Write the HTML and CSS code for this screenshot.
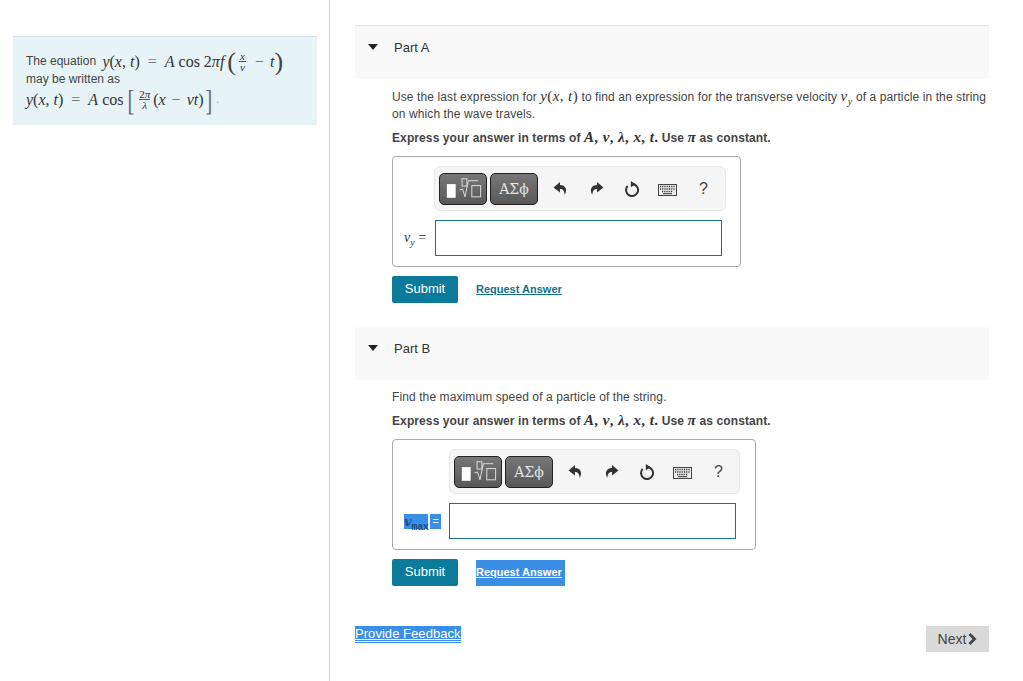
FILE: index.html
```html
<!DOCTYPE html>
<html lang="en">
<head>
  <meta charset="UTF-8">
  <meta name="viewport" content="width=device-width, initial-scale=1.0">
  <title>Part A and Part B</title>
  <link rel="stylesheet" href="styles.css">
</head>
<body>
  <svg class="icon-defs" width="0" height="0">
    <symbol id="i-root" viewBox="0 0 47 32">
      <rect x="7" y="11" width="9" height="14" fill="#fff"/>
      <g fill="none" stroke="#ddd">
        <rect x="22.500" y="5.500" width="5" height="7.500"/>
        <path d="M20 17l3-1 2.500 8L29 7.500h10"/>
        <rect x="32.500" y="12.500" width="9" height="11.500"/>
      </g>
    </symbol>
    <symbol id="i-undo" viewBox="0 0 14 14"><path d="M6.500 1 .5 6l6 4.800V7.500c2.800 0 4 1.500 4.500 5.500 2.800-5.200.5-9-4.500-9.200z"/></symbol>
    <symbol id="i-redo" viewBox="0 0 14 14"><path d="M7.500 1l6 5-6 4.800V7.500c-2.800 0-4 1.500-4.500 5.500C.2 7.800 2.500 4 7.500 3.800z"/></symbol>
    <symbol id="i-reset" viewBox="0 0 16 16"><path d="M9.500 3.200A6 6 0 1 1 3.600 5" fill="none" stroke="currentColor" stroke-width="2"/><path d="M6.800 0l5 3.200-5 3z"/></symbol>
    <symbol id="i-keys" viewBox="0 0 19 12"><rect x=".5" y=".5" width="18" height="11" fill="#eee" stroke="#444"/><path d="M2 2.500h15M2 5h15M4 7.500h11" stroke="#333" stroke-width="1.300" stroke-dasharray="1 .8"/><path d="M5 9.700h9" stroke="#333"/></symbol>
  </svg>

  <aside class="sidebar">
    <div class="note">
      <div class="note-first">The equation <span class="math"><i>y</i>(<i>x</i>, <i>t</i>)</span><span class="math eq">=</span><span class="math"><i>A</i> cos 2<i>πf</i></span><span class="math"><span class="big">(</span><span class="frac"><i>x</i><i class="den">v</i></span><span class="op">−</span><i>t</i><span class="big">)</span></span></div>
      <div class="note-mid">may be written as</div>
      <div class="note-last"><span class="math"><i>y</i>(<i>x</i>, <i>t</i>)</span><span class="math eq">=</span><span class="math"><i>A</i> cos</span><span class="math"><span class="big bracket">[</span><span class="frac"><span>2<i>π</i></span><i class="den">λ</i></span>(<i>x</i><span class="op">−</span><i>vt</i>)<span class="big bracket">]</span></span><span class="faint">.</span></div>
    </div>
  </aside>

  <main class="content">
    <section class="part">
      <header class="part-head"><span class="caret"></span>Part A</header>
      <div class="part-body">
        <p class="question">Use the last expression for <span class="math q-math"><i>y</i>(<i>x</i>, <i>t</i>)</span> to find an expression for the transverse velocity <span class="math q-math"><i>v<sub>y</sub></i></span> of a particle in the string on which the wave travels.</p>
        <p class="express">Express your answer in terms of <span class="math q-math"><i>A</i>, <i>v</i>, <i>λ</i>, <i>x</i>, <i>t</i>.</span> Use <span class="math q-math"><i>π</i></span> as constant.</p>
        <div class="answer-box">
          <div class="toolbar">
            <button class="tool-btn"><svg class="root"><use href="#i-root"/></svg></button>
            <button class="tool-btn greek">ΑΣϕ</button>
            <svg class="tool undo"><use href="#i-undo"/></svg>
            <svg class="tool redo"><use href="#i-redo"/></svg>
            <svg class="tool reset"><use href="#i-reset"/></svg>
            <svg class="tool keys"><use href="#i-keys"/></svg>
            <span class="help">?</span>
          </div>
          <div class="answer-row">
            <label class="answer-label"><i>v<sub>y</sub></i> =</label>
            <div class="answer-input"></div>
          </div>
        </div>
        <div class="actions">
          <button class="submit">Submit</button>
          <a class="request" href="#">Request Answer</a>
        </div>
      </div>
    </section>

    <section class="part">
      <header class="part-head"><span class="caret"></span>Part B</header>
      <div class="part-body">
        <p class="question">Find the maximum speed of a particle of the string.</p>
        <p class="express">Express your answer in terms of <span class="math q-math"><i>A</i>, <i>v</i>, <i>λ</i>, <i>x</i>, <i>t</i>.</span> Use <span class="math q-math"><i>π</i></span> as constant.</p>
        <div class="answer-box wide">
          <div class="toolbar">
            <button class="tool-btn"><svg class="root"><use href="#i-root"/></svg></button>
            <button class="tool-btn greek">ΑΣϕ</button>
            <svg class="tool undo"><use href="#i-undo"/></svg>
            <svg class="tool redo"><use href="#i-redo"/></svg>
            <svg class="tool reset"><use href="#i-reset"/></svg>
            <svg class="tool keys"><use href="#i-keys"/></svg>
            <span class="help">?</span>
          </div>
          <div class="answer-row">
            <label class="answer-label picked"><span class="hl"><i>v</i><sub>max</sub></span><span class="hl eq-hl">=</span></label>
            <div class="answer-input"></div>
          </div>
        </div>
        <div class="actions">
          <button class="submit">Submit</button>
          <a class="request hl-block" href="#">Request Answer</a>
        </div>
      </div>
    </section>

    <footer class="foot">
      <a class="feedback" href="#">Provide Feedback</a>
      <button class="next">Next<svg class="next-arrow" viewBox="0 0 9 12"><path d="M1.500 1 6.500 6 1.500 11" fill="none" stroke="#444" stroke-width="2.800"/></svg></button>
    </footer>
  </main>
</body>
</html>
```

FILE: styles.css
```css
* {
  box-sizing: border-box;
}
body {
  margin: 0;
  height: 100vh;
  overflow: hidden;
  display: flex;
  font-family: "Liberation Sans", Arial, sans-serif;
  font-size: 12px;
  color: #444;
  background: #fff;
}
.icon-defs {
  position: absolute;
}
.sidebar {
  width: 330px;
  flex: none;
  padding: 36px 12px 0 13px;
  border-right: 1px solid #bcd6e4;
}
.note {
  height: 89px;
  padding: 9px 0 0 13px;
  background: #e6f4f7;
  border-top: 1px solid #d3e4ea;
  line-height: 17px;
}
.note-first {
  height: 31px;
  display: flex;
  align-items: center;
  gap: 3px;
  white-space: pre;
}
.note-mid {
  margin-top: -6px;
}
.note-last {
  height: 23px;
  display: flex;
  align-items: center;
  gap: 3px;
  white-space: pre;
}
.math {
  font-family: "Liberation Serif", "Times New Roman", serif;
  font-size: 16px;
  color: #333;
  display: inline-flex;
  align-items: center;
}
.q-math {
  display: inline;
  font-size: 15px;
  line-height: 1;
  letter-spacing: 0.4px;
}
.q-math sub {
  font-size: 10px;
  line-height: 0;
}
.eq {
  margin: 0 5px;
  color: #777;
}
.op {
  margin: 0 6px;
  color: #666;
}
.big {
  font-size: 26px;
  line-height: 20px;
  font-weight: 400;
  color: #444;
}
.bracket {
  font-size: 29px;
  color: #666;
  transform: scaleX(0.7);
}
.frac {
  display: inline-flex;
  flex-direction: column;
  align-items: center;
  font-size: 11px;
  line-height: 10px;
  margin: 0 3px;
}
.den {
  border-top: 1px solid #555;
  padding: 0 1px;
  align-self: stretch;
  text-align: center;
}
.faint {
  color: #999;
  font-family: "Liberation Serif", serif;
}
.content {
  width: 693px;
  flex: none;
  padding: 25px 34px 0 25px;
  display: flex;
  flex-direction: column;
}
.part {
  margin-bottom: 24px;
}
.part-head {
  height: 54px;
  background: #f9f9f9;
  border-top: 1px solid #e6e6e6;
  display: flex;
  align-items: flex-start;
  padding-top: 14px;
  font-size: 13px;
  color: #333;
  line-height: 15px;
}
.part:nth-of-type(2) .part-head {
  height: 53px;
  border-top: none;
}
.caret {
  width: 0;
  height: 0;
  margin: 4px 16px 0 13px;
  border-left: 5px solid transparent;
  border-right: 5px solid transparent;
  border-top: 6px solid #222;
}
.part-body {
  padding-left: 37px;
}
.question {
  margin: 10px 0 0;
  line-height: 17px;
  letter-spacing: 0.1px;
}
.part:nth-of-type(2) .question {
  margin-top: 9px;
}
.express {
  margin: 7px 0 0;
  font-weight: bold;
  line-height: 17px;
  color: #444;
  letter-spacing: 0.1px;
}
.answer-box {
  width: 349px;
  height: 111px;
  margin-top: 9px;
  padding: 9px 14px 0 10px;
  border: 1px solid #aaa;
  border-radius: 4px;
}
.answer-box.wide {
  width: 364px;
  padding-right: 15px;
}
.toolbar {
  height: 45px;
  margin-left: 31px;
  display: flex;
  align-items: center;
  padding-left: 4px;
  background: #f5f5f5;
  border: 1px solid #e8e8e8;
  border-radius: 6px;
}
.wide .toolbar {
  margin-left: 46px;
}
.tool-btn {
  width: 48px;
  height: 32px;
  margin-right: 3px;
  padding: 0;
  display: flex;
  align-items: center;
  justify-content: center;
  color: #e4e4e4;
  background: linear-gradient(#777, #585858);
  border: 1px solid #222;
  border-radius: 5px;
}
.root {
  width: 47px;
  height: 32px;
}
.greek {
  font-family: "DejaVu Serif", "Liberation Serif", serif;
  font-size: 14px;
}
.tool {
  flex: none;
  fill: #333;
  color: #333;
  width: 15px;
  height: 15px;
}
.undo {
  margin-left: 12px;
}
.redo {
  margin-left: 21px;
}
.reset {
  width: 16px;
  height: 16px;
  margin-left: 20px;
}
.keys {
  width: 19px;
  height: 12px;
  margin-left: 18px;
  margin-top: 3px;
}
.help {
  margin-left: 22px;
  font-size: 16px;
  color: #444;
}
.answer-row {
  display: flex;
  align-items: center;
  margin-top: 9px;
}
.answer-label {
  width: 32px;
  flex: none;
  padding-left: 1px;
  font-family: "Liberation Serif", serif;
  font-size: 14px;
  color: #333;
  white-space: nowrap;
}
.answer-label sub {
  font-size: 10px;
  line-height: 0;
}
.answer-label.picked {
  width: 46px;
  display: flex;
  gap: 2px;
}
.hl {
  font-family: "DejaVu Serif", serif;
  font-size: 13px;
  line-height: 15px;
  background: #3a8ee6;
  color: #1c4d80;
  font-weight: bold;
}
.hl sub {
  font-size: 10px;
  font-family: "Liberation Mono", monospace;
  letter-spacing: -0.4px;
}
.eq-hl {
  padding: 0 2px;
  color: #e8f0fa;
  font-weight: normal;
  font-family: "Liberation Sans", sans-serif;
  font-size: 11px;
}
.answer-input {
  width: 287px;
  height: 36px;
  background: #fff;
  border: 1px solid #1c7089;
}
.actions {
  display: flex;
  align-items: center;
  margin-top: 9px;
  gap: 18px;
}
.submit {
  width: 66px;
  height: 27px;
  padding: 0 0 3px;
  font-family: "Liberation Sans", sans-serif;
  font-size: 13px;
  color: #fff;
  background: #0c7a9b;
  border: none;
  border-radius: 2px;
}
.request {
  font-size: 11px;
  font-weight: bold;
  color: #13708a;
  padding-bottom: 1px;
}
.hl-block {
  display: flex;
  align-items: center;
  align-self: flex-end;
  height: 26px;
  width: 89px;
  padding-bottom: 2px;
  color: #fff;
  background: #3a8ee6;
}
.foot {
  display: flex;
  justify-content: space-between;
  align-items: flex-start;
  margin-top: 15px;
}
.feedback {
  margin-top: 1px;
  font-size: 13px;
  line-height: 15px;
  letter-spacing: 0.05px;
  color: #fff;
  background: #3a8ee6;
  border-bottom: 1px solid #fff;
  box-shadow: 0 1px 0 #3a8ee6;
}
.next {
  width: 63px;
  height: 26px;
  margin-top: 1px;
  padding: 0;
  display: flex;
  align-items: center;
  justify-content: center;
  gap: 2px;
  font-family: "Liberation Sans", sans-serif;
  font-size: 14px;
  color: #444;
  background: #d9d9d9;
  border: none;
}
.next-arrow {
  width: 9px;
  height: 12px;
}
```
